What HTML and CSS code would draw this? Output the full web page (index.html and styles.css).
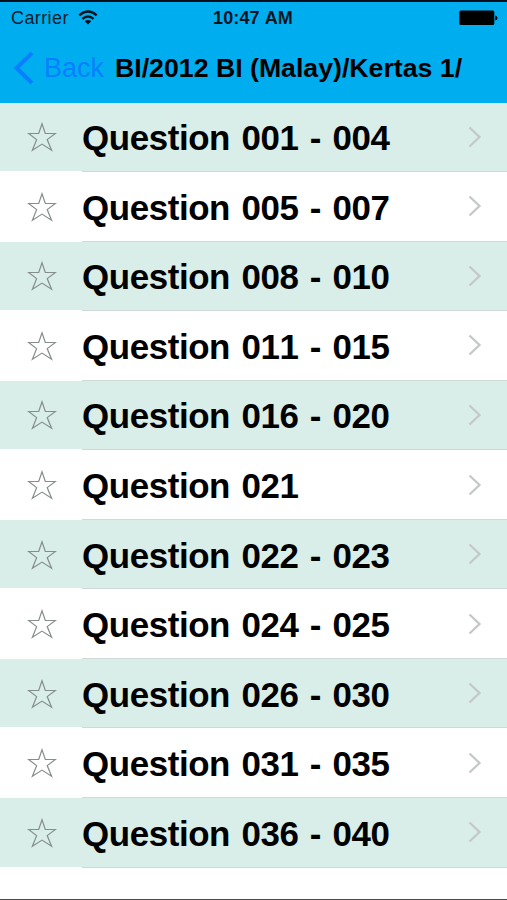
FILE: index.html
```
<!DOCTYPE html>
<html lang="en">
<head>
<meta charset="utf-8">
<title>Questions</title>
<link rel="stylesheet" href="styles.css">
</head>
<body>
<svg class="defs" width="0" height="0" aria-hidden="true">
  <symbol id="star" viewBox="0 0 30 30"><path d="M15 1.8 18.3 11.5H28.4L20.2 17.6 24.6 28.2 15 22.1 5.4 28.2 9.6 17.6 1.6 11.5H11.7Z"/></symbol>
  <symbol id="chevron" viewBox="0 0 14 22"><path d="M1.5 1.5 11.5 11 1.5 20.5"/></symbol>
</svg>
<div class="screen">
  <header class="top">
    <div class="status">
      <div class="carrier"><span>Carrier</span>
        <svg class="wifi" viewBox="0 0 20 15"><path class="arc" d="M1.3 5.3Q10 -2.3 18.7 5.3M4.4 8.9Q10 4 15.6 8.9"/><path d="M6.7 11.3Q10 8.5 13.3 11.3L10 14.6Z"/></svg>
      </div>
      <div class="time">10:47 AM</div>
      <svg class="battery" viewBox="0 0 39 16"><rect x="0.3" y="0.5" width="35" height="14.6" rx="1.5"/><path d="M36.3 5.5Q38.5 6 38.5 8T36.3 10.5Z"/></svg>
    </div>
    <nav class="nav">
      <svg class="back-icon" viewBox="0 0 22 34"><path d="M19 2 3.5 17 19 32"/></svg>
      <span class="back">Back</span>
      <h1 class="title">BI/2012 BI (Malay)/Kertas 1/</h1>
    </nav>
  </header>
  <ul class="list">
    <li class="row"><svg class="star"><use href="#star"/></svg><span class="label">Question 001 - 004</span><svg class="chevron"><use href="#chevron"/></svg></li>
    <li class="row"><svg class="star"><use href="#star"/></svg><span class="label">Question 005 - 007</span><svg class="chevron"><use href="#chevron"/></svg></li>
    <li class="row"><svg class="star"><use href="#star"/></svg><span class="label">Question 008 - 010</span><svg class="chevron"><use href="#chevron"/></svg></li>
    <li class="row"><svg class="star"><use href="#star"/></svg><span class="label">Question 011 - 015</span><svg class="chevron"><use href="#chevron"/></svg></li>
    <li class="row"><svg class="star"><use href="#star"/></svg><span class="label">Question 016 - 020</span><svg class="chevron"><use href="#chevron"/></svg></li>
    <li class="row"><svg class="star"><use href="#star"/></svg><span class="label">Question 021</span><svg class="chevron"><use href="#chevron"/></svg></li>
    <li class="row"><svg class="star"><use href="#star"/></svg><span class="label">Question 022 - 023</span><svg class="chevron"><use href="#chevron"/></svg></li>
    <li class="row"><svg class="star"><use href="#star"/></svg><span class="label">Question 024 - 025</span><svg class="chevron"><use href="#chevron"/></svg></li>
    <li class="row"><svg class="star"><use href="#star"/></svg><span class="label">Question 026 - 030</span><svg class="chevron"><use href="#chevron"/></svg></li>
    <li class="row"><svg class="star"><use href="#star"/></svg><span class="label">Question 031 - 035</span><svg class="chevron"><use href="#chevron"/></svg></li>
    <li class="row"><svg class="star"><use href="#star"/></svg><span class="label">Question 036 - 040</span><svg class="chevron"><use href="#chevron"/></svg></li>
  </ul>
</div>
</body>
</html>
```
FILE: styles.css
```
* { box-sizing: border-box; }
body {
  margin: 0;
  background: #fff;
  color: #000;
  font-family: "Liberation Sans", Arial, sans-serif;
  font-kerning: none;
}
.defs { display: none; }
.screen {
  display: flex;
  flex-direction: column;
  height: 900px;
  overflow: hidden;
  border-bottom: 1px solid #48494b;
}
.top {
  height: 102.5px;
  flex: none;
  background: #00adef;
  border-top: 2px solid #05101c;
}
.status {
  display: grid;
  grid-template-columns: 1fr auto 1fr;
  align-items: center;
  height: 33px;
  padding: 0 9px 0 11px;
}
.carrier {
  display: flex;
  align-items: center;
  gap: 9px;
  font-size: 18px;
  letter-spacing: 0.4px;
  color: #07202d;
}
.wifi { width: 20px; height: 15px; margin-top: -3px; fill: #03131c; }
.wifi .arc { fill: none; stroke: #03131c; stroke-width: 2.3; }
.time { margin-left: -3px; font-size: 18px; font-weight: bold; letter-spacing: 0.1px; color: #03151f; }
.battery { width: 39px; height: 16px; justify-self: end; margin-top: -1px; }
.nav { display: flex; align-items: center; height: 66px; padding-left: 13px; }
.back-icon {
  width: 22px;
  height: 34px;
  fill: none;
  stroke: #087fff;
  stroke-width: 4;
}
.back { width: 71px; margin-left: 9px; font-size: 27px; color: #087fff; }
.title { margin: 0; padding-top: 1px; font-size: 26.7px; font-weight: bold; white-space: nowrap; }
.list { margin: 0; padding: 0; list-style: none; }
.row {
  display: flex;
  align-items: center;
  height: 69.55px;
  padding: 0 25px 0 27px;
  background: linear-gradient(to right, #fff 82px, #cfdad7 82px) bottom / 100% 1px no-repeat;
}
.row:nth-child(odd) { background-color: #d9eee8; }
.star { width: 30px; height: 30px; margin-right: 25px; fill: none; stroke: #858e8c; stroke-width: 1.2; }
.label {
  flex: 1;
  padding-top: 2px;
  font-size: 34.9px;
  font-weight: bold;
  line-height: 40px;
  letter-spacing: -0.4px;
  word-spacing: 2.1px;
  white-space: nowrap;
}
.chevron { width: 14px; height: 22px; margin-top: -1px; fill: none; stroke: #c4c8c9; stroke-width: 2.3; }
```
